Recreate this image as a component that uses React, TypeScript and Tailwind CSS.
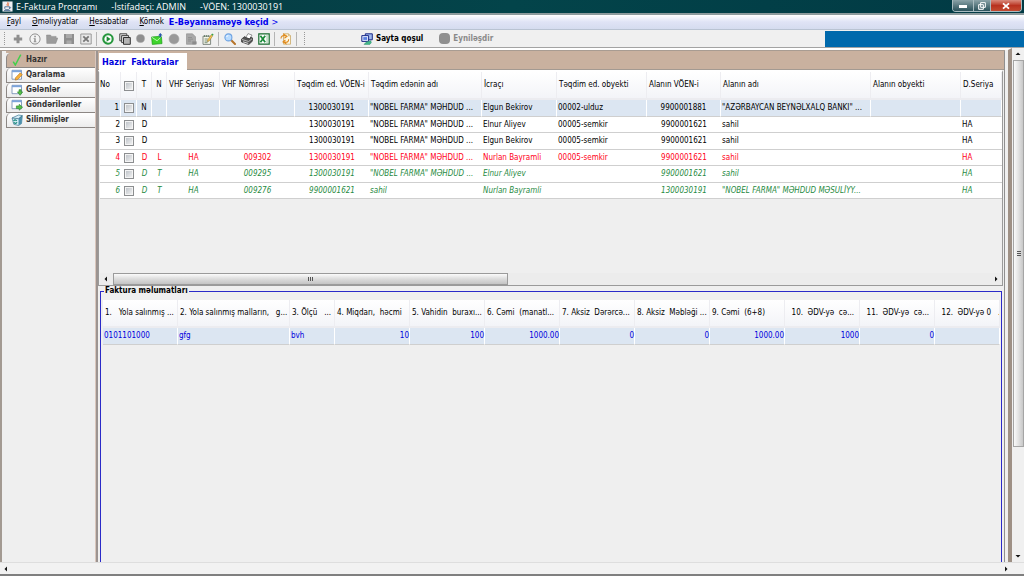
import type { ReactNode } from 'react'
import { clsx } from 'clsx'

type Align = 'left' | 'center' | 'right'

const MENU = [
  { key: 'F', rest: 'ayl' },
  { key: 'Ə', rest: 'məliyyatlar' },
  { key: 'H', rest: 'esabatlar' },
  { key: 'K', rest: 'ömək' },
]

const INVOICE_COLS: { label: string; width: string; align: Align }[] = [
  { label: 'T', width: 'w-[15px]', align: 'center' },
  { label: 'N', width: 'w-[15px]', align: 'center' },
  { label: 'VHF Seriyası', width: 'w-[53px]', align: 'center' },
  { label: 'VHF Nömrəsi', width: 'w-[75px]', align: 'center' },
  { label: 'Təqdim ed. VÖEN-i', width: 'w-[74px]', align: 'center' },
  { label: 'Təqdim edənin adı', width: 'w-[113px]', align: 'left' },
  { label: 'İcraçı', width: 'w-[75px]', align: 'left' },
  { label: 'Təqdim ed. obyekti', width: 'w-[90px]', align: 'left' },
  { label: 'Alanın VÖEN-i', width: 'w-[74px]', align: 'center' },
  { label: 'Alanın adı', width: 'w-[150px]', align: 'left' },
  { label: 'Alanın obyekti', width: 'w-[90px]', align: 'left' },
  { label: 'D.Seriya', width: 'w-auto', align: 'left' },
]

const NOBEL = '"NOBEL FARMA" MƏHDUD ...'

const INVOICES = [
  { tone: 'text-black', cells: ['N', '', '', '', '1300030191', NOBEL, 'Elgun Bekirov', '00002-ulduz', '9900001881', '"AZƏRBAYCAN BEYNƏLXALQ BANKI" ...', '', ''] },
  { tone: 'text-black', cells: ['D', '', '', '', '1300030191', NOBEL, 'Elnur Aliyev', '00005-semkir', '9900001621', 'sahil', '', 'HA'] },
  { tone: 'text-black', cells: ['D', '', '', '', '1300030191', NOBEL, 'Elgun Bekirov', '00005-semkir', '9900001621', 'sahil', '', 'HA'] },
  { tone: 'text-[#ff0018]', cells: ['D', 'L', 'HA', '009302', '1300030191', NOBEL, 'Nurlan Bayramli', '00005-semkir', '9900001621', 'sahil', '', 'HA'] },
  { tone: 'italic text-[#1f8a42]', cells: ['D', 'T', 'HA', '009295', '1300030191', NOBEL, 'Elnur Aliyev', '', '9900001621', 'sahil', '', 'HA'] },
  { tone: 'italic text-[#1f8a42]', cells: ['D', 'T', 'HA', '009276', '9900001621', 'sahil', 'Nurlan Bayramli', '', '1300030191', '"NOBEL FARMA" MƏHDUD MƏSULİYY...', '', 'HA'] },
]

const DETAIL_COLS = [
  { label: '1.   Yola salınmış ...', width: 'w-[75px]', value: '0101101000', right: false },
  { label: '2. Yola salınmış malların,   g...', width: 'w-[112px]', value: 'gfg', right: false },
  { label: '3. Ölçü   ...', width: 'w-[45px]', value: 'bvh', right: false },
  { label: '4. Miqdarı,  həcmi', width: 'w-[75px]', value: '10', right: true },
  { label: '5. Vahidin  buraxı...', width: 'w-[75px]', value: '100', right: true },
  { label: '6. Cəmi  (manatl...', width: 'w-[75px]', value: '1000.00', right: true },
  { label: '7. Aksiz  Dərərcə...', width: 'w-[75px]', value: '0', right: true },
  { label: '8. Aksiz  Məbləği ...', width: 'w-[75px]', value: '0', right: true },
  { label: '9. Cəmi  (6+8)', width: 'w-[75px]', value: '1000.00', right: true },
  { label: '  10.  ƏDV-yə  cə...', width: 'w-[75px]', value: '1000', right: true },
  { label: '  11.  ƏDV-yə  cə...', width: 'w-[75px]', value: '0', right: true },
  { label: '  12.  ƏDV-yə 0   .', width: 'w-auto', value: '', right: true },
]

const ALIGN: Record<Align, string> = {
  left: 'text-left pl-px',
  center: 'text-center',
  right: 'text-right pr-px',
}

function Svg({ children, className = 'size-3' }: { children: ReactNode; className?: string }) {
  return (
    <svg viewBox="0 0 12 12" className={clsx('shrink-0', className)} fill="none" aria-hidden="true">
      {children}
    </svg>
  )
}

const ICONS = {
  add: <path d="M4.5 1.8h3v2.7h2.7v3H7.5v2.7h-3V7.5H1.800v-3h2.700z" fill="#8f8f8f" />,
  info: (
    <>
      <circle cx="6" cy="6" r="5.1" fill="#f4f4f4" stroke="#909090" />
      <path d="M5.3 2.8h1.5v1.4H5.3zM4.6 5.2h2.1v3.2h.8v.9H4.6v-.9h.7V6.1h-.7z" fill="#8a8a8a" />
    </>
  ),
  folder: <path d="M.5 2h4l1 1.4h4.6v1.6h1.700L9.800 10.400H.8z" fill="#9b9b9b" stroke="#8a8a8a" strokeWidth=".5" />,
  save: (
    <>
      <path d="M1 1h10v10H1z" fill="#8e8e8e" />
      <path d="M3 1h6v4H3zM3.500 7.500h5V11h-5z" fill="#a9a9a9" />
    </>
  ),
  close: (
    <>
      <path d="M.8 1h10.4v10H.8z" fill="#e8e8e8" stroke="#999" />
      <path d="M3.3 3.300l5.400 5.400M8.700 3.300l-5.400 5.400" stroke="#777" strokeWidth="1.800" />
    </>
  ),
  run: (
    <>
      <circle cx="6" cy="6" r="4.700" fill="#fff" stroke="#27973d" strokeWidth="2.100" />
      <path d="M4.600 3.200l4 2.800-4 2.800z" fill="#1c8a34" />
    </>
  ),
  copy: (
    <>
      <path d="M.8.8h7v7h-7z" fill="#eee" stroke="#444" />
      <path d="M2.600 2.600h7v7h-7z" fill="#e4e4e4" stroke="#444" />
      <path d="M4.500 4.500h6.800v6.800H4.500z" fill="#b4b4b4" stroke="#333" />
    </>
  ),
  dot: <circle cx="6" cy="6" r="4.400" fill="#8f8f8f" stroke="#a5a5a5" strokeWidth=".6" />,
  bigDot: <circle cx="6" cy="6" r="5" fill="#999" stroke="#aaa" strokeWidth=".6" />,
  mail: (
    <>
      <path d="M.6 4l9.800-.8.6 7.400-9.700.8z" fill="#3fd52c" stroke="#1b9b18" strokeWidth=".7" />
      <path d="M.8 4.200l5.300 3.600 4.400-4.400" stroke="#d8ffd0" strokeWidth=".8" />
      <path d="M9.300 0l2.200 2.500H10v2H8.600v-2H7.200z" fill="#2655a8" />
    </>
  ),
  file: (
    <>
      <path d="M1.500.8h6l3 3v7.500h-9z" fill="#a8a8a8" stroke="#8b8b8b" strokeWidth=".6" />
      <path d="M3 4.500h4M3 6.200h5M3 8h3" stroke="#888" strokeWidth=".7" />
      <path d="M7.300 8.400h4.300v2.900H7.300z" fill="#8b8b8b" />
    </>
  ),
  note: (
    <>
      <path d="M1 3.200h7.600v8.200H1z" fill="#f5f5e9" stroke="#667068" strokeWidth=".8" />
      <path d="M2.500 2v2M4.400 2v2M6.300 2v2M2.600 6h3.200M2.600 8h4M2.600 9.700h3" stroke="#59765f" strokeWidth=".8" />
      <path d="M5.800 6.800l3.500-5 1.400 1-3.400 5-1.800.8z" fill="#f1ca55" stroke="#a16f20" strokeWidth=".5" />
      <path d="M9.300 1.800l.8-1.200 1.500 1-.9 1.200z" fill="#34a34a" />
    </>
  ),
  search: (
    <>
      <path d="M6.800 6.800l4.200 4.200" stroke="#b6742a" strokeWidth="2" strokeLinecap="round" />
      <circle cx="4.400" cy="4.400" r="3.500" fill="#b9dcff" stroke="#6ea3e2" strokeWidth="1.100" />
      <path d="M2.600 4c.2-.9.8-1.400 1.700-1.500" stroke="#fff" strokeWidth=".9" />
    </>
  ),
  print: (
    <>
      <path d="M4.600 4.800L7 .6l4 1.500-2.400 4z" fill="#fff" stroke="#555" strokeWidth=".6" />
      <path d="M.4 6.200l3.200-2.600 1.300.9 3.600 1.400 1.300-1.700 1.900.8-.4 3.300-3.600 3.300L.6 9z" fill="#555" stroke="#222" strokeWidth=".6" />
      <path d="M1 6.500l6.700 2L11 5.800" stroke="#d0d0d0" strokeWidth=".8" />
      <path d="M2 8.800l5.200 1.600" stroke="#eee" strokeWidth=".9" />
    </>
  ),
  excel: (
    <>
      <path d="M.8.8h10.400v10.400H.8z" fill="#fff" stroke="#176b2e" strokeWidth="1.200" />
      <path d="M8.200 3h2M8.200 5h2M8.200 7h2M8.200 9h2" stroke="#6cae78" strokeWidth=".8" />
      <path d="M2.400 2.800l4.800 6.400M7.200 2.800L2.400 9.200" stroke="#1b8b3a" strokeWidth="1.800" />
    </>
  ),
  script: (
    <>
      <path d="M3.500.8h5l2 2v8.400h-7z" fill="#fdf6e2" stroke="#c9a866" strokeWidth=".8" />
      <path d="M8.500.8v2h2" stroke="#c9a866" strokeWidth=".7" />
      <path d="M1 5.600c0-2.600 2-3.400 3.600-2.800L4 1.400l3 1.800-2.600 2" stroke="#e08a1c" strokeWidth="1.100" />
      <path d="M8.600 6.200c.2 2.400-1.500 3.300-3.400 2.900l.6 1.500L3 9l2.400-2" stroke="#e08a1c" strokeWidth="1.100" />
    </>
  ),
  site: (
    <>
      <path d="M4.300.8h7v6h-7z" fill="#9db8ef" stroke="#1c2a86" />
      <path d="M.8 2.600h6.800v5.800H.8z" fill="#dfe9ff" stroke="#1c2a86" />
      <path d="M2.300 4.100h3.800v2.800H2.300z" fill="#5b7fe0" />
      <path d="M3 11.400l2.300-2.300 4.500-1.300.5 2-1.500 1.600z" fill="#45b88a" stroke="#2b8f68" strokeWidth=".5" />
    </>
  ),
  java: (
    <>
      <path d="M.5.5h11v11H.5z" fill="#eef1f4" />
      <path d="M6.300 1.200c1.500 1.500-2.200 2.200-.4 4.200M7.900 2.400c-1.800 1-.9 1.800-.6 2.900" stroke="#dd5a22" strokeWidth=".9" />
      <path d="M3 6.300h5.200v1.400c0 1.200-.7 1.700-1.400 1.700H4.400C3.600 9.400 3 8.900 3 7.700zM8.200 6.600c1.600-.3 1.600 1.500-.1 1.600M2.200 10.400h6.900" stroke="#45688f" strokeWidth=".9" />
    </>
  ),
  check: <path d="M2.500 8.200l1.800 2.800L9.500 1.200" stroke="#43d04b" strokeWidth="1.500" strokeLinecap="round" />,
  draft: (
    <>
      <path d="M1 1.300h9.500v8.900H1z" fill="#fff" stroke="#6b87ad" strokeWidth=".8" />
      <path d="M1 1.300h9.500v1.900H1z" fill="#7ba4dc" />
      <path d="M4.700 8.600L9.300 3.800l2 2-4.700 4.700-2.400.6z" fill="#f7b13d" stroke="#b87217" strokeWidth=".6" />
    </>
  ),
  inbox: (
    <>
      <path d="M1 1.300h9.500v8.400H1z" fill="#fff" stroke="#6b87ad" strokeWidth=".8" />
      <path d="M1 1.300h9.500v1.900H1z" fill="#7ba4dc" />
      <path d="M8 5.700h2.200v2.200h1.500L9.100 11.300 6.400 7.900H8z" fill="#56bf48" stroke="#25802a" strokeWidth=".6" />
    </>
  ),
  outbox: (
    <>
      <path d="M1 1.300h9.500v8.400H1z" fill="#fff" stroke="#6b87ad" strokeWidth=".8" />
      <path d="M1 1.300h9.500v1.900H1z" fill="#7ba4dc" />
      <path d="M5.400 6.900h2.800V5.300l3.400 2.900-3.400 3V9.600H5.400z" fill="#56bf48" stroke="#25802a" strokeWidth=".6" />
    </>
  ),
  trash: (
    <>
      <path d="M1 4l6.500-3 3.800.6-.8 8-3 1.900-4.700-1.200z" fill="#d4ecf6" stroke="#3c7893" strokeWidth=".7" />
      <path d="M7.600 4.600l3.700-3-.8 8-3 1.900z" fill="#4d91ad" />
      <path d="M1 4l6.600.7 3.700-3.100" stroke="#2f6580" strokeWidth=".7" />
      <path d="M2.600 7c.8-1.600 2.500-1.500 3 0M6 8.200c-.7 1.500-2.400 1.500-3.200.1" stroke="#178a78" strokeWidth="1.200" />
    </>
  ),
}

type IconName = keyof typeof ICONS

const FOLDERS: { label: string; icon: IconName }[] = [
  { label: 'Hazır', icon: 'check' },
  { label: 'Qaralama', icon: 'draft' },
  { label: 'Gələnlər', icon: 'inbox' },
  { label: 'Göndərilənlər', icon: 'outbox' },
  { label: 'Silinmişlər', icon: 'trash' },
]

const TOOL_GROUPS: IconName[][] = [
  ['add', 'info', 'folder', 'save', 'close'],
  ['run', 'copy', 'dot', 'mail', 'bigDot', 'file', 'note'],
  ['search', 'print', 'excel'],
  ['script'],
]

const ARROWS = {
  left: 'M7 3.500v5L4.500 6z',
  right: 'M5 3.500v5L7.500 6z',
  up: 'M3.500 7h5L6 4.500z',
  down: 'M3.500 5h5L6 7.500z',
}

function ScrollArrow({ dir }: { dir: keyof typeof ARROWS }) {
  return (
    <button aria-label={dir} className="flex size-3 shrink-0 items-center justify-center">
      <Svg>
        <path d={ARROWS[dir]} fill="#111" />
      </Svg>
    </button>
  )
}

function Tick({ label }: { label: string }) {
  return (
    <input
      type="checkbox"
      aria-label={label}
      className="mx-auto block size-[10px] appearance-none border border-[#8c8e90] bg-linear-to-br from-[#b9bec4] to-[#f6f6f6] shadow-[inset_0_0_0_1px_#f4f4f4] checked:bg-[#4a7db8]"
    />
  )
}

function TitleBar() {
  return (
    <header className="flex h-[15px] shrink-0 items-start justify-between border-b-2 border-[#8d9b9d] bg-linear-to-r from-[#073a42] via-[#03444a] to-[#013a44] pl-[2px] font-['Open_Sans','Noto_Sans',sans-serif] text-[9px] leading-[13px] font-normal text-white">
      <div className="flex items-center">
        <Svg className="mr-[3px] size-[11px]">{ICONS.java}</Svg>
        <h1>E-Faktura Proqramı</h1>
        <span className="ml-[14px]">-İstifadəçi: ADMIN</span>
        <span className="ml-[14px]">-VÖEN: 1300030191</span>
      </div>
      <div className="mr-[2px] flex h-3 overflow-hidden rounded-b-sm border border-t-0 border-[#a9bcc0]">
        <button aria-label="Kiçilt" className="flex w-5 items-end justify-center bg-linear-to-b from-[#8ba3a8] to-[#2b535b] pb-[3px]">
          <span className="h-[3px] w-2 bg-white" />
        </button>
        <button aria-label="Böyüt" className="flex w-[18px] items-center justify-center border-x border-[#a9bcc0] bg-linear-to-b from-[#8ba3a8] to-[#2b535b]">
          <Svg className="size-2">
            <path d="M4 1h7v7H4zM1 4h7v7H1z" fill="#5b7980" stroke="#fff" strokeWidth="1.500" />
          </Svg>
        </button>
        <button aria-label="Bağla" className="flex w-[30px] items-center justify-center bg-linear-to-b from-[#d98a7c] via-[#b8311f] to-[#c24a30]">
          <Svg className="size-2">
            <path d="M1.500 2l9 8M10.500 2l-9 8" stroke="#fff" strokeWidth="2.800" />
          </Svg>
        </button>
      </div>
    </header>
  )
}

function MenuBar() {
  return (
    <nav className="flex h-[15px] shrink-0 items-center gap-[11px] border-b border-[#b9c3d2] bg-linear-to-b from-white via-[#dfe3f5] to-[#d5dcef] pl-[7px] leading-3">
      {MENU.map((item) => (
        <button key={item.rest}>
          <span className="underline">{item.key}</span>
          {item.rest}
        </button>
      ))}
      <a href="#" className="-ml-[6px] text-[9px] font-bold whitespace-nowrap text-[#0000ee]">
        E-Bəyannaməyə keçid <span className="font-normal">&gt;</span>
      </a>
    </nav>
  )
}

function Toolbar() {
  return (
    <div className="flex h-[18px] shrink-0 items-stretch border-b border-[#a3a3a3] bg-[#f0f0f0]">
      <div className="my-[2px] ml-1 mr-1 border-l border-dotted border-[#999]" />
      {TOOL_GROUPS.map((group, i) => (
        <div key={i} className="flex items-center">
          {group.map((name) => (
            <button key={name} aria-label={name} className={clsx('flex justify-center', name === 'dot' ? 'w-[15px]' : 'w-[17px]')}>
              <Svg className={name === 'dot' ? 'size-[11px]' : 'size-3'}>{ICONS[name]}</Svg>
            </button>
          ))}
          <span className="mx-[2px] h-[14px] w-px bg-[#b5b5b5]" />
        </div>
      ))}
      <div className="my-[2px] ml-[5px] border-l border-dotted border-[#999]" />
      <div className="ml-14 flex items-center gap-4 font-bold">
        <button className="flex items-center gap-[3px]">
          <Svg>{ICONS.site}</Svg>
          Sayta qoşul
        </button>
        <button className="flex items-center gap-[3px] text-[#8a8a8a]">
          <span className="size-[11px] rounded-[4px] bg-[#8f8f8f]" />
          Eyniləşdir
        </button>
      </div>
      <div className="mt-px ml-auto w-[199px] bg-[#0069ac]" />
    </div>
  )
}

function Sidebar() {
  return (
    <aside className="w-[98px] shrink-0 border-r-2 border-[#9c9491] bg-[#efefef]">
      <div className="h-full border-r border-l-2 border-r-[#d9c6bc] border-l-[#a39a92] pl-1">
        <div className="h-[2px] bg-[#c9b19f]" />
        {FOLDERS.map((folder, i) => (
          <button
            key={folder.label}
            className={clsx(
              'flex h-[15px] w-full items-center gap-[3px] rounded-tl-[5px] border-b border-l border-[#8c8784] pl-1 font-bold text-[#333]',
              i === 0 ? 'bg-[#c9b19f]' : 'bg-linear-to-b from-white to-[#ececec]',
            )}
          >
            <Svg>{ICONS[folder.icon]}</Svg>
            {folder.label}
          </button>
        ))}
      </div>
    </aside>
  )
}

const HEAD = 'h-7 border-r border-b-2 border-r-[#ededf1] border-b-[#ececf0] bg-linear-to-b from-white to-[#f3f4f8] p-0 font-normal whitespace-pre overflow-hidden'

function InvoiceTable() {
  return (
    <table className="w-full table-fixed border-separate border-spacing-0">
      <colgroup>
        <col className="w-[21px]" />
        <col className="w-4" />
        {INVOICE_COLS.map((col) => (
          <col key={col.label} className={col.width} />
        ))}
      </colgroup>
      <thead>
        <tr>
          <th className={clsx(HEAD, 'text-left')}>No</th>
          <th className={clsx(HEAD, 'pt-[2px]')}>
            <Tick label="Hamısını seç" />
          </th>
          {INVOICE_COLS.map((col) => (
            <th key={col.label} className={clsx(HEAD, col.width === 'w-[15px]' ? 'text-center' : 'pl-[2px] text-left')}>
              {col.label}
            </th>
          ))}
        </tr>
      </thead>
      <tbody>
        {INVOICES.map((row, i) => {
          const cell = clsx(
            'overflow-hidden border-b border-b-[#cfcfcf] p-0 whitespace-nowrap',
            i === 0 ? 'border-r border-r-white bg-[#dce6f2]' : 'bg-white',
          )
          return (
            <tr key={i} className={clsx('odd:h-[17px] even:h-4', row.tone)}>
              <td className={clsx(cell, ALIGN.right)}>{i + 1}</td>
              <td className={cell}>
                <Tick label={`Faktura ${i + 1}`} />
              </td>
              {row.cells.map((value, c) => (
                <td key={c} className={clsx(cell, ALIGN[INVOICE_COLS[c].align])}>
                  {value}
                </td>
              ))}
            </tr>
          )
        })}
      </tbody>
    </table>
  )
}

function DetailTable() {
  return (
    <table className="w-full table-fixed border-separate border-spacing-0">
      <colgroup>
        {DETAIL_COLS.map((col) => (
          <col key={col.label} className={col.width} />
        ))}
      </colgroup>
      <thead>
        <tr>
          {DETAIL_COLS.map((col) => (
            <th key={col.label} className={clsx(HEAD, 'pl-[2px] text-left')}>
              {col.label}
            </th>
          ))}
        </tr>
      </thead>
      <tbody>
        <tr className="h-[17px] text-[#0000dd]">
          {DETAIL_COLS.map((col) => (
            <td
              key={col.label}
              className={clsx('border-r border-b border-r-white border-b-[#cfcfcf] bg-[#dce6f2] p-0', col.right ? 'text-right' : 'pl-px')}
            >
              {col.value}
            </td>
          ))}
        </tr>
      </tbody>
    </table>
  )
}

function MainPanel() {
  return (
    <main className="flex min-w-0 flex-1 flex-col border-r border-[#8f8f8f]">
      <div className="flex h-[19px] shrink-0 items-end border-b border-[#a39a92] bg-[#c9b19f] pl-px">
        <button className="-mb-px h-[17px] w-[88px] bg-white pl-[3px] text-left text-[9px] font-bold whitespace-pre text-[#0000dd]">
          Hazır  Fakturalar
        </button>
      </div>
      <section className="mr-px flex h-[216px] shrink-0 flex-col border-x border-t-2 border-b border-t-white border-r-[#9a9a9a] border-b-[#9a9a9a] border-l-[#9a9a9a] pl-px">
        <InvoiceTable />
        <div className="mt-auto flex h-3 items-stretch bg-[#ececec]">
          <ScrollArrow dir="left" />
          <div className="flex flex-1 pl-px">
            <div className="flex w-[45%] items-center justify-center gap-px border border-[#9b9b9b] bg-linear-to-b from-[#fbfbfb] via-[#dcdcdc] to-[#c4c4c4]">
              <span className="h-1 w-px bg-[#555]" />
              <span className="h-1 w-px bg-[#555]" />
              <span className="h-1 w-px bg-[#555]" />
            </div>
          </div>
          <ScrollArrow dir="right" />
        </div>
      </section>
      <fieldset className="mx-[2px] min-h-0 min-w-0 flex-1 border border-b-0 border-[#2a2ac8] pt-1 pr-px pl-[2px]">
        <legend className="ml-px px-px text-[8px] leading-[10px] font-bold">Faktura məlumatları</legend>
        <DetailTable />
      </fieldset>
    </main>
  )
}

export default function App() {
  return (
    <div className="flex h-screen flex-col overflow-hidden border-b-2 border-[#7f7f7f] bg-[#efefef] font-['DejaVu_Sans_Condensed','DejaVu_Sans',sans-serif] text-[8px] leading-[10px] text-black">
      <TitleBar />
      <MenuBar />
      <Toolbar />
      <div className="flex min-h-0 flex-1">
        <div className="flex min-w-0 flex-1 border-t-2 border-r-4 border-white border-r-[#9e9085]">
          <div className="mr-[3px] flex min-w-0 flex-1 border-t border-[#a89c92]">
            <Sidebar />
            <MainPanel />
          </div>
        </div>
        <div className="flex w-3 shrink-0 flex-col bg-[#f0f0f0]">
          <ScrollArrow dir="up" />
          <div className="flex-1">
            <div className="ml-px flex h-[79%] flex-col items-center justify-center gap-px border border-[#a5a5a5] bg-linear-to-r from-[#fafafa] via-[#e2e2e2] to-[#c8c8c8]">
              <span className="h-px w-1 bg-[#555]" />
              <span className="h-px w-1 bg-[#555]" />
              <span className="h-px w-1 bg-[#555]" />
            </div>
          </div>
          <ScrollArrow dir="down" />
        </div>
      </div>
      <div className="flex h-3 shrink-0 justify-between border-t border-[#dedede] bg-[#f2f2f2] pr-3">
        <ScrollArrow dir="left" />
        <ScrollArrow dir="right" />
      </div>
    </div>
  )
}
